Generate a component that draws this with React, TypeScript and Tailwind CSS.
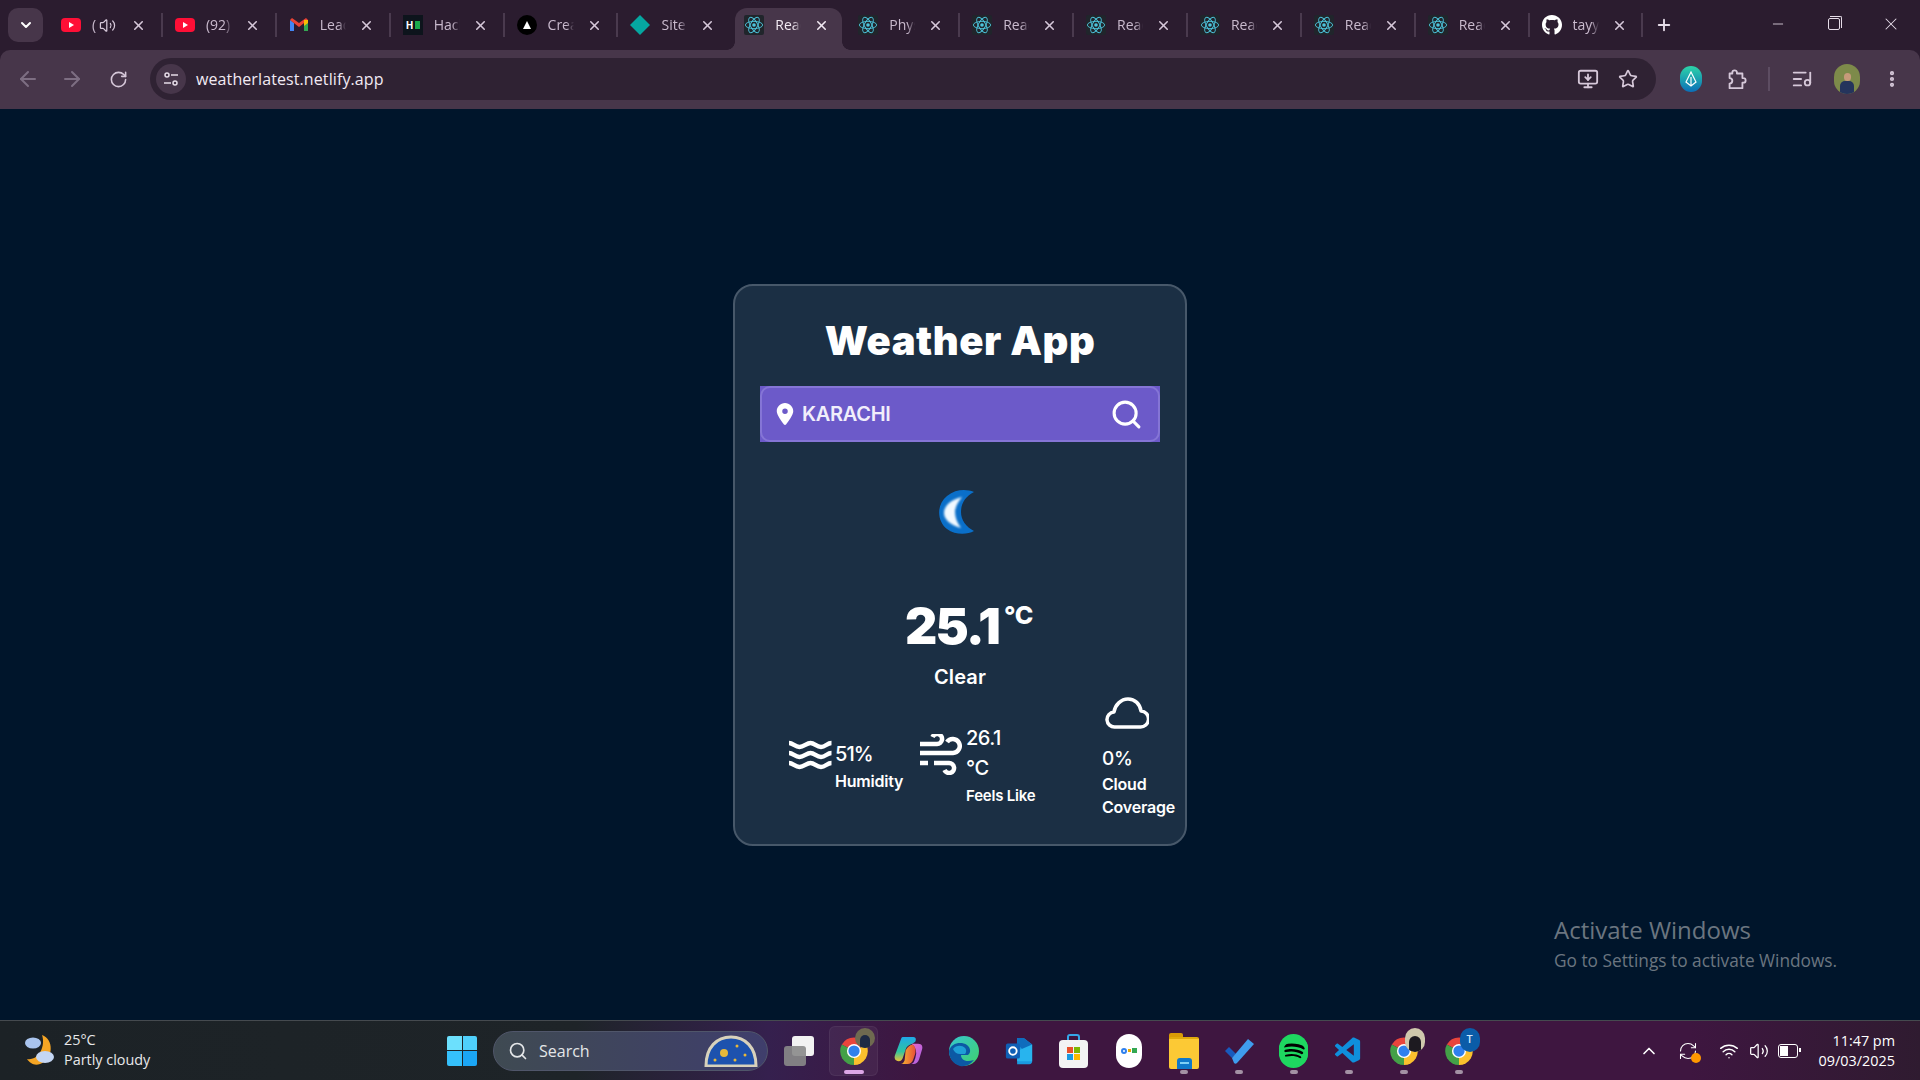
import type { ReactNode } from 'react'
import {
  ArrowLeft,
  ArrowRight,
  ChevronDown,
  ChevronUp,
  EllipsisVertical,
  ListMusic,
  Minus,
  MonitorDown,
  Plus,
  RefreshCw,
  RotateCw,
  Search,
  Star,
  Volume2,
  Wifi,
  X,
} from 'lucide-react'
import { FaGithub, FaSpotify } from 'react-icons/fa'
import { FaLocationDot } from 'react-icons/fa6'
import { VscVscode } from 'react-icons/vsc'

const UI_FONT = "font-['Open_Sans','Noto_Sans',sans-serif]"

function YouTubeIcon() {
  return (
    <svg viewBox="0 0 20 20" className="w-5 h-5">
      <rect x="0" y="3" width="20" height="14" rx="4" fill="#ff0f36" />
      <path d="M8 7l5 3-5 3z" fill="#fff" />
    </svg>
  )
}

function GmailIcon() {
  return (
    <svg viewBox="0 0 20 20" className="w-5 h-5">
      <path d="M1 5v11h4V8z" fill="#4285f4" />
      <path d="M19 5v11h-4V8z" fill="#34a853" />
      <path d="M1 5l9 7 9-7-2-2-7 5-7-5z" fill="#ea4335" />
      <path d="M15 5l4 0v3l-4 3z" fill="#fbbc04" />
    </svg>
  )
}

function HackIcon() {
  return (
    <div className="w-5 h-5 bg-[#0d141c] flex items-center justify-center gap-[1px]">
      <span className="text-[10px] leading-none font-bold text-white">H</span>
      <span className="w-[5px] h-2 bg-[#1ba94c]" />
    </div>
  )
}

function CreateIcon() {
  return (
    <div className="w-5 h-5 rounded-full bg-black flex items-center justify-center">
      <svg viewBox="0 0 10 10" className="w-[10px] h-[10px]">
        <path d="M5 1l4 8H1z" fill="#fff" />
      </svg>
    </div>
  )
}

function SiteIcon() {
  return (
    <svg viewBox="0 0 20 20" className="w-5 h-5">
      <path d="M10 0l10 10-10 10L0 10z" fill="#05a6a0" />
    </svg>
  )
}

function ReactIcon() {
  return (
    <div className="w-5 h-5 bg-[#20252b] rounded-[2px]">
      <svg viewBox="-11 -11 22 22" className="w-5 h-5" fill="none" stroke="#4dc4dc" strokeWidth="1">
        <circle r="2" fill="#4dc4dc" stroke="none" />
        <ellipse rx="9.5" ry="4" />
        <ellipse rx="9.5" ry="4" transform="rotate(60)" />
        <ellipse rx="9.5" ry="4" transform="rotate(120)" />
      </svg>
    </div>
  )
}

const tabs: { icon: ReactNode; label: string; audio?: boolean; active?: boolean; noSep?: boolean }[] = [
  { icon: <YouTubeIcon />, label: '(', audio: true },
  { icon: <YouTubeIcon />, label: '(92)' },
  { icon: <GmailIcon />, label: 'Lead' },
  { icon: <HackIcon />, label: 'Hack' },
  { icon: <CreateIcon />, label: 'Crea' },
  { icon: <SiteIcon />, label: 'Site', noSep: true },
  { icon: <ReactIcon />, label: 'Reac', active: true, noSep: true },
  { icon: <ReactIcon />, label: 'Phys' },
  { icon: <ReactIcon />, label: 'Reac' },
  { icon: <ReactIcon />, label: 'Reac' },
  { icon: <ReactIcon />, label: 'Reac' },
  { icon: <ReactIcon />, label: 'Reac' },
  { icon: <ReactIcon />, label: 'Reac' },
  { icon: <FaGithub className="w-[22px] h-[22px] text-white" />, label: 'tayy' },
]

function Tab({ tab }: { tab: (typeof tabs)[number] }) {
  return (
    <div className="relative w-[113.9px] h-[42px] flex items-center">
      {tab.active && (
        <>
          <div className="absolute left-1 right-[3px] top-0 bottom-0 bg-[#47364a] rounded-t-[12px]" />
          <div className="absolute left-[-4px] bottom-0 w-2 h-2 bg-[radial-gradient(circle_at_0_0,transparent_7.5px,#47364a_8px)]" />
          <div className="absolute right-[-5px] bottom-0 w-2 h-2 bg-[radial-gradient(circle_at_100%_0,transparent_7.5px,#47364a_8px)]" />
        </>
      )}
      <div className="relative w-full flex items-center pl-[13px] -mt-[8px]">
        <div className="w-5 h-5 flex items-center justify-center shrink-0">{tab.icon}</div>
        <div
          className={`ml-[11px] overflow-hidden whitespace-nowrap text-[14px] leading-[20px] [mask-image:linear-gradient(to_right,black_70%,transparent)] ${
            tab.active ? 'text-[#f2eaf3]' : 'text-[#c9bacd]'
          } ${tab.audio ? 'w-[5px]' : 'w-[26px]'}`}
        >
          {tab.label}
        </div>
        {tab.audio && <Volume2 className="w-[17px] h-[17px] ml-[2px] text-[#d6c8d9]" strokeWidth={1.75} />}
        <X
          className={`absolute left-[83px] w-[15px] h-[15px] ${tab.active ? 'text-[#f2eaf3]' : 'text-[#d6c8d9]'}`}
          strokeWidth={2.5}
        />
        {!tab.noSep && <div className="absolute right-[-1px] w-[2px] h-6 bg-[#4a3a4e]" />}
      </div>
    </div>
  )
}

function BrowserChrome() {
  return (
    <div className={`${UI_FONT} bg-[#2b1c2f]`}>
      {/* Tab strip */}
      <div className="relative h-[50px] flex items-start pt-2 pl-2">
        <div className="w-[35px] h-[34px] rounded-[10px] bg-[#47364a] flex items-center justify-center shrink-0 mr-[5px]">
          <ChevronDown className="w-4 h-4 text-white" strokeWidth={3} />
        </div>
        {tabs.map((tab, i) => (
          <Tab key={i} tab={tab} />
        ))}
        <Plus className="w-[18px] h-[18px] text-[#e6dce8] ml-[13px] mt-[8px]" strokeWidth={2.5} />
        <div className="ml-auto flex items-center h-[32px] text-[#e6dce8]">
          <div className="w-[56px] flex justify-center">
            <Minus className="w-4 h-4" strokeWidth={1.25} />
          </div>
          <div className="w-[56px] flex justify-center">
            <div className="relative w-3 h-3 border border-[#e6dce8] rounded-[2px]">
              <div className="absolute -top-[3px] -right-[3px] w-3 h-3 border-t border-r border-[#e6dce8] rounded-tr-[2px]" />
            </div>
          </div>
          <div className="w-[58px] flex justify-center">
            <X className="w-5 h-5" strokeWidth={1.25} />
          </div>
        </div>
      </div>

      {/* Toolbar */}
      <div className="h-[59px] bg-[#47364a] rounded-t-[10px] flex items-center pl-[16px] pb-[1px]">
        <ArrowLeft className="w-6 h-6 text-[#7d6e82] shrink-0" strokeWidth={2} />
        <ArrowRight className="w-6 h-6 text-[#7d6e82] ml-5 shrink-0" strokeWidth={2} />
        <RotateCw className="w-[19px] h-[19px] text-[#d6c8d9] ml-[25px] shrink-0" strokeWidth={2} />
        <div className="ml-[22px] w-[1506px] shrink-0 h-[42px] rounded-full bg-[#2f2233] flex items-center pl-[6px] pr-[18px]">
          <div className="w-[30px] h-[30px] rounded-full bg-[#47364a] flex items-center justify-center">
            <svg viewBox="0 0 16 16" className="w-4 h-4" fill="none" stroke="#e6dce8" strokeWidth="1.5">
              <circle cx="4" cy="4" r="2" />
              <path d="M8 4h7M1 12h7" />
              <circle cx="12" cy="12" r="2" />
            </svg>
          </div>
          <span className="ml-[10px] text-[16px] tracking-[0.1px] text-[#f2eaf3]">weatherlatest.netlify.app</span>
          <MonitorDown className="ml-auto w-[22px] h-[22px] text-[#d6c8d9]" strokeWidth={2} />
          <Star className="ml-[19px] w-5 h-5 text-[#d6c8d9]" strokeWidth={2} />
        </div>
        <div className="ml-[24px] w-[22px] h-[26px] shrink-0 rounded-full bg-[linear-gradient(#2dd4a8,#0b6fb8)] flex items-center justify-center">
          <svg viewBox="0 0 12 16" className="w-3 h-4" fill="none" stroke="#fff" strokeWidth="1.2">
            <path d="M6 1l5 10-5 4-5-4zM6 6v9" />
          </svg>
        </div>
        <svg viewBox="0 0 24 24" className="ml-[23px] w-[22px] h-[22px] shrink-0" fill="none" stroke="#d6c8d9" strokeWidth="2" strokeLinejoin="round">
          <path d="M8 5a2.5 2.5 0 0 1 5 0v1h6v5h1a2.5 2.5 0 0 1 0 5h-1v6H5v-5a2.5 2.5 0 0 0 0-6V6h3z" />
        </svg>
        <div className="ml-[21px] w-[2px] h-6 bg-[#5d4d62] shrink-0" />
        <ListMusic className="ml-[21px] w-[22px] h-[22px] text-[#d6c8d9] shrink-0" strokeWidth={2} />
        <Avatar className="ml-[21px] w-[26px] h-[30px] shrink-0" />
        <EllipsisVertical className="ml-[22px] w-5 h-5 text-[#d6c8d9] shrink-0" strokeWidth={3} />
      </div>
    </div>
  )
}

function Avatar({ className }: { className: string }) {
  return (
    <div className={`${className} rounded-full overflow-hidden bg-[#7d8a4a] flex flex-col items-center justify-end`}>
      <div className="w-[7px] h-[8px] rounded-full bg-[#c79a7a]" />
      <div className="w-[14px] h-[13px] rounded-t-[5px] bg-[#25345c]" />
    </div>
  )
}

function Moon() {
  return (
    <svg viewBox="0 0 38 46" className="w-[38px] h-[46px] ml-[-6px]">
      <defs>
        <filter id="glow" x="-30%" y="-30%" width="160%" height="160%">
          <feGaussianBlur stdDeviation="1.2" />
        </filter>
      </defs>
      <path d="M36 3C28 0 18 0 9 7C-2 16-1 32 9 40C17 46 29 46 36 42C28 38 23 31 23 23C23 14 28 7 36 3z" fill="#0a6fc9" />
      <path d="M24 8C12 11 6 17 6 24C6 30 12 36 23 39C19 34 17 28 17 23C17 18 20 13 24 8z" fill="#f1f9ff" filter="url(#glow)" />
    </svg>
  )
}

function WavesIcon() {
  const wave = 'c4 0 6 4 10.5 4s7-4 11-4s6 4 10.5 4s6-4 10.5-4'
  return (
    <svg viewBox="0 0 43 30" className="w-[43px] h-[30px] shrink-0" fill="none" stroke="#fff" strokeWidth="4.5">
      <path d={`M0 3${wave}`} />
      <path d={`M0 13${wave}`} />
      <path d={`M0 23${wave}`} />
    </svg>
  )
}

function WindIcon() {
  return (
    <svg viewBox="0 0 42 41" className="w-[42px] h-[41px] mt-[11px] shrink-0" fill="none" stroke="#fff" strokeWidth="4.5">
      <path d="M0 10H17a5 5 0 1 0-4.5-7" />
      <path d="M0 19H33a7 7 0 1 0-6-11" />
      <path d="M0 29H8M14 29H29a5 5 0 1 1-4.5 7" />
    </svg>
  )
}

function WeatherCard() {
  return (
    <div className="w-[454px] h-[562px] rounded-[20px] border-2 border-[#47586a] bg-[#1b2f44] font-['Inter',sans-serif] text-white">
      <h1 className="mt-[29px] text-center text-[40px] leading-[52px] font-black tracking-[0.5px]">Weather App</h1>
      <div className="mt-[19px] mx-[25px] h-[56px] bg-[#6c5ac9]">
        <div className="h-full rounded-[10px] border-2 border-[#8575d6] flex items-center pl-[14px] pr-[15px]">
          <FaLocationDot className="w-[18px] h-[22px] text-white" />
          <span className="ml-2 text-[20px] font-semibold tracking-[-0.3px] text-[#f1eefb]">KARACHI</span>
          <Search className="ml-auto w-[33px] h-[33px] text-white" strokeWidth={2.25} />
        </div>
      </div>

      <div className="mt-[47px] flex justify-center">
        <Moon />
      </div>

      <div className="mt-[59px] flex justify-center pl-[18px]">
        <span className="text-[50px] leading-[64px] font-black tracking-[-1.8px]">25.1</span>
        <span className="ml-[5px] mt-[3px] text-[25px] leading-[36px] font-extrabold tracking-[-0.3px]">°C</span>
      </div>
      <div className="mt-[4px] text-center text-[20px] leading-[30px] font-semibold tracking-[0.1px]">Clear</div>

      {/* Stats */}
      <div className="mt-[5px] flex items-center pl-[54px]">
        <div className="w-[131px] mt-[16px] flex items-start">
          <WavesIcon />
          <div className="ml-[3px]">
            <div className="text-[20px] leading-[29px] font-medium tracking-[-0.9px]">51%</div>
            <div className="text-[16px] leading-[24px] font-semibold tracking-[-0.2px] whitespace-nowrap">Humidity</div>
          </div>
        </div>
        <div className="w-[182px] mt-[14px] flex items-start">
          <WindIcon />
          <div className="ml-[4px]">
            <div className="text-[20px] leading-[30px] font-medium tracking-[-0.5px]">
              26.1
              <br />
              °C
            </div>
            <div className="text-[15px] leading-[25px] font-semibold tracking-[-0.2px] whitespace-nowrap">Feels Like</div>
          </div>
        </div>
        <div className="flex flex-col">
          <svg viewBox="0 0 44 32" className="w-[44px] h-[32px] ml-[3px]" fill="none" stroke="#fff" strokeWidth="3.5" strokeLinejoin="round">
            <path d="M10 30a7.5 7.5 0 0 1-1-15c1-7 7-13 14-13s12 5 13 12a8 8 0 0 1-1 16z" />
          </svg>
          <div className="mt-[15px] text-[19px] leading-[29px] font-medium tracking-[-0.3px]">0%</div>
          <div className="text-[16px] leading-[23px] font-semibold tracking-[-0.2px]">
            Cloud
            <br />
            Coverage
          </div>
        </div>
      </div>
    </div>
  )
}

function ChromeLogo({ badge }: { badge?: ReactNode }) {
  return (
    <div className="relative w-[30px] h-[30px]">
      <svg viewBox="0 0 32 32" className="w-[30px] h-[30px]">
        <path d="M16 16L3 9A15 15 0 0 1 29 9z" fill="#e8453c" />
        <path d="M16 16L29 9A15 15 0 0 1 16 31z" fill="#fbc02d" />
        <path d="M16 16L16 31A15 15 0 0 1 3 9z" fill="#43a047" />
        <circle cx="16" cy="16" r="7.5" fill="#fff" />
        <circle cx="16" cy="16" r="6" fill="#2f80ed" />
      </svg>
      {badge}
    </div>
  )
}

const photoBadge = (
  <div className="absolute -top-[8px] -right-[6px] w-5 h-5 rounded-full bg-[#6f6a50] flex items-end justify-center overflow-hidden">
    <div className="w-[10px] h-[13px] rounded-t-full bg-[#1e2a44]" />
  </div>
)

const taskbarApps: { icon: ReactNode; active?: boolean; dot?: boolean }[] = [
  {
    active: true,
    icon: <ChromeLogo badge={photoBadge} />,
  },
  {
    icon: (
      <svg viewBox="0 0 30 30" className="w-[29px] h-[29px]">
        <defs>
          <linearGradient id="cp" x1="0" y1="0" x2="0" y2="1">
            <stop offset="0" stopColor="#1fa8e8" />
            <stop offset="0.6" stopColor="#2fc4a0" />
            <stop offset="1" stopColor="#e8c13a" />
          </linearGradient>
          <linearGradient id="cp2" x1="0" y1="0" x2="1" y2="1">
            <stop offset="0" stopColor="#e868c8" />
            <stop offset="1" stopColor="#a45fe6" />
          </linearGradient>
          <linearGradient id="cp3" x1="0" y1="0" x2="1" y2="0">
            <stop offset="0" stopColor="#f5b82e" />
            <stop offset="1" stopColor="#e8503a" />
          </linearGradient>
        </defs>
        <path d="M9 1h11c3 0 3 3 2 5l-3 2c-4 1-6 3-7 6l-3 9c-1 2-2 3-4 3-4 0-5-3-4-6L7 4c.5-2 1-3 2-3z" fill="url(#cp)" />
        <path d="M18 8h7c4 0 5 3 4 6l-3 10c-1 3-3 5-6 5h-2c3-1 3-4 4-6l1-5c0-5-2-8-5-10z" fill="url(#cp2)" />
        <path d="M12 15c2-4 5-6 7-6s4 4 3 9l-2 6c-1 3-3 5-6 5H7c2 0 3-2 4-4z" fill="url(#cp3)" />
      </svg>
    ),
  },
  {
    icon: (
      <svg viewBox="0 0 30 32" className="w-[30px] h-[32px]">
        <defs>
          <linearGradient id="ed" x1="0" y1="0" x2="1" y2="1">
            <stop offset="0" stopColor="#37c6d0" />
            <stop offset="1" stopColor="#3fd06a" />
          </linearGradient>
        </defs>
        <circle cx="15" cy="16" r="15" fill="url(#ed)" />
        <path d="M0 16C2 8 12 6 18 10c4 3 4 8 1 10H12c0 4 4 8 13 5-4 5-9 7-14 6C4 29 0 23 0 16z" fill="#0c59a4" />
        <path d="M4 14c3-4 9-4 12-1 2 2 1 5 0 6h-5c-3 0-6-2-7-5z" fill="#1f9fd6" />
      </svg>
    ),
  },
  {
    icon: (
      <svg viewBox="0 0 32 32" className="w-[30px] h-[30px]">
        <path d="M14 2h7l9 7v18c0 2-1 3-3 3H14z" fill="#1a9ae0" />
        <path d="M14 2h7l9 7-8 7-8-7z" fill="#0f6cbd" />
        <path d="M14 16l16-7v18H14z" fill="#28b4ee" />
        <rect x="2" y="8" width="15" height="16" rx="2" fill="#0f5fb5" />
        <circle cx="9.5" cy="16" r="4" fill="none" stroke="#fff" strokeWidth="2" />
      </svg>
    ),
  },
  {
    icon: (
      <div className="relative w-[29px] h-[34px]">
        <div className="absolute left-[8px] top-0 w-[13px] h-[8px] border-2 border-b-0 border-[#35a7e8] rounded-t-[3px]" />
        <div className="absolute left-0 bottom-0 w-[29px] h-[28px] rounded-[4px] bg-[#f3f3f3] grid grid-cols-2 gap-[1px] place-content-center justify-center px-[8px]">
          <span className="h-[6px] bg-[#e8502a]" />
          <span className="h-[6px] bg-[#7db600]" />
          <span className="h-[6px] bg-[#1a9ae0]" />
          <span className="h-[6px] bg-[#fbb900]" />
        </div>
      </div>
    ),
  },
  {
    icon: (
      <div className="w-[26px] h-[34px] rounded-full bg-white flex items-center justify-center gap-[1px]">
        <span className="w-[6px] h-[6px] rounded-full border-2 border-[#2f80ed]" />
        <span className="w-[3px] h-[3px] bg-[#e8a800]" />
        <span className="w-[5px] h-[5px] bg-[#34a853]" />
      </div>
    ),
  },
  {
    dot: true,
    icon: (
      <div className="relative w-[30px] h-[36px]">
        <div className="absolute left-0 top-0 w-[14px] h-[8px] rounded-t-[2px] bg-[#d99a06]" />
        <div className="absolute left-0 top-[4px] w-[30px] h-[32px] bg-[#fcc935] rounded-[2px] border-t-2 border-[#e0a90c]" />
        <div className="absolute left-[8px] bottom-0 w-[15px] h-[11px] rounded-t-[3px] bg-[#0f78c9]">
          <div className="mx-auto mt-[4px] w-[9px] h-[2px] bg-[#7fd0f5]" />
        </div>
      </div>
    ),
  },
  {
    dot: true,
    icon: (
      <svg viewBox="0 0 30 30" className="w-[30px] h-[30px]">
        <path d="M1 15l4-4 7 7-4 4z" fill="#185abd" />
        <path d="M8 22L24 3l6 5-17 19c-1 1-2 1-3 0z" fill="#3f9dee" />
      </svg>
    ),
  },
  {
    dot: true,
    icon: (
      <div className="w-[29px] h-[34px] rounded-full bg-[#1ed760] flex items-center justify-center overflow-hidden">
        <div className="w-[22px] h-[18px] rounded-full bg-black flex items-center justify-center">
          <FaSpotify className="w-[32px] h-[32px] shrink-0 text-[#1ed760]" />
        </div>
      </div>
    ),
  },
  {
    dot: true,
    icon: <VscVscode className="w-[31px] h-[36px] text-[#0f8fdc]" />,
  },
  {
    dot: true,
    icon: (
      <ChromeLogo
        badge={
          <div className="absolute -top-[8px] -right-[6px] w-5 h-[24px] rounded-full bg-[#cfc8ac] flex items-end justify-center overflow-hidden">
            <div className="w-3 h-4 rounded-t-full bg-[#1d1a20]" />
          </div>
        }
      />
    ),
  },
  {
    dot: true,
    icon: (
      <ChromeLogo
        badge={
          <div className="absolute -top-[8px] -right-[6px] w-5 h-[24px] rounded-full bg-[#0b5ca8] flex items-center justify-center text-[11px] font-semibold text-[#cfe6fa]">
            T
          </div>
        }
      />
    ),
  },
]

function Taskbar() {
  return (
    <div
      className={`relative h-[60px] border-t border-[#454a4f] bg-[linear-gradient(to_right,#1c2226_0%,#1e2428_30%,#35204e_40%,#3e1640_48%,#3e1640_88%,#2f1b30_100%)] flex items-center ${UI_FONT}`}
    >
      {/* Weather widget */}
      <div className="w-[447px] flex items-center pl-[24px]">
        <svg viewBox="0 0 32 36" className="w-[32px] h-[36px]">
          <path d="M18 2C30 6 30 26 16 31C10 33 6 30 3 26C14 28 22 14 18 2z" fill="#f5a524" />
          <ellipse cx="9" cy="10" rx="8" ry="5.5" fill="#a9c4ee" />
          <ellipse cx="21" cy="24" rx="9" ry="6" fill="#c4d6f4" />
        </svg>
        <div className="ml-[8px] text-[14.4px] leading-[20px] text-[#e8e8ea] -mt-[1px]">
          <div>25°C</div>
          <div>Partly cloudy</div>
        </div>
      </div>

      {/* Start */}
      <div className="w-[30px] h-[30px] grid grid-cols-2 gap-[1px]">
        <span className="rounded-tl-[2px] bg-[#6ce0fd]" />
        <span className="rounded-tr-[2px] bg-[#4fd0fb]" />
        <span className="rounded-bl-[2px] bg-[#35c0fb]" />
        <span className="rounded-br-[2px] bg-[#1ba6f5]" />
      </div>

      {/* Search */}
      <div className="ml-[16px] w-[275px] h-[40px] rounded-full border border-[#50566a] bg-[linear-gradient(to_right,#3f4a52,#3f3e6c)] flex items-center pl-[14px] relative">
        <Search className="w-[20px] h-[20px] text-[#e4e6e8]" strokeWidth={2} />
        <span className="ml-[11px] text-[16px] text-[#e4e6e8]">Search</span>
        <svg viewBox="0 0 56 32" className="absolute right-[8px] bottom-[3px] w-[56px] h-[32px]">
          <path d="M3 31C3 12 14 2 28 2s25 10 25 29z" fill="#1d52ae" stroke="#d8d2bc" strokeWidth="3" />
          <circle cx="21" cy="18" r="4" fill="#e8b93a" />
          <circle cx="34" cy="11" r="1.5" fill="#e8b93a" />
          <circle cx="42" cy="20" r="1.5" fill="#e8b93a" />
          <circle cx="32" cy="25" r="1.5" fill="#e8b93a" />
          <circle cx="12" cy="25" r="1.5" fill="#e8b93a" />
        </svg>
      </div>

      {/* Task view */}
      <div className="w-[55px] ml-[3px] flex justify-center">
        <div className="relative w-[30px] h-[30px]">
          <div className="absolute right-0 top-0 w-[22px] h-[20px] rounded-[3px] bg-[#f2f2f2]" />
          <div className="absolute left-0 bottom-0 w-[22px] h-[20px] rounded-[3px] bg-[#8a8a8a]/90" />
        </div>
      </div>

      {/* Pinned apps */}
      {taskbarApps.map((app, i) => (
        <div key={i} className="relative w-[55px] h-[50px] flex items-center justify-center">
          {app.active && <div className="absolute left-[3px] right-[3px] inset-y-0 rounded-[6px] bg-white/5 border border-white/5" />}
          <div className="relative">{app.icon}</div>
          {app.active && <div className="absolute bottom-[2px] w-5 h-1 rounded-full bg-[#dca6e6]" />}
          {app.dot && <div className="absolute bottom-[2px] w-2 h-1 rounded-full bg-[#a391a4]" />}
        </div>
      ))}

      {/* Tray */}
      <div className="ml-auto flex items-center pr-[25px] text-white">
        <ChevronUp className="w-5 h-5 mr-[19px]" strokeWidth={2} />
        <div className="relative w-[22px] h-[20px] mr-[19px]">
          <RefreshCw className="w-5 h-5" strokeWidth={1.25} />
          <span className="absolute right-[-1px] bottom-[-2px] w-[10px] h-[10px] rounded-full bg-[#ff9800]" />
        </div>
        <Wifi className="w-5 h-5 mr-[10px]" strokeWidth={1.75} />
        <Volume2 className="w-5 h-5 mr-[9px]" strokeWidth={1.5} />
        <div className="relative w-[20px] h-[14px] border-[1.5px] border-white rounded-[3px] mr-[21px]">
          <div className="absolute left-[1px] top-[1px] bottom-[1px] w-2 bg-white" />
          <div className="absolute -right-[4px] top-[3px] w-[2px] h-1 bg-white" />
        </div>
        <div className="text-right text-[14.4px] leading-[20px] text-white">
          <div>11:47 pm</div>
          <div>09/03/2025</div>
        </div>
      </div>
    </div>
  )
}

export default function App() {
  return (
    <div className="w-[1920px] h-[1080px] overflow-hidden flex flex-col bg-[#00152b]">
      <BrowserChrome />
      <main className="relative flex-1 flex justify-center pt-[175px] pr-0">
        <WeatherCard />
        <div className={`absolute left-[1554px] top-[805px] text-[#6b7580] ${UI_FONT}`}>
          <div className="text-[24px] leading-[32px]">Activate Windows</div>
          <div className="text-[17.3px] leading-[30px]">Go to Settings to activate Windows.</div>
        </div>
      </main>
      <Taskbar />
    </div>
  )
}
